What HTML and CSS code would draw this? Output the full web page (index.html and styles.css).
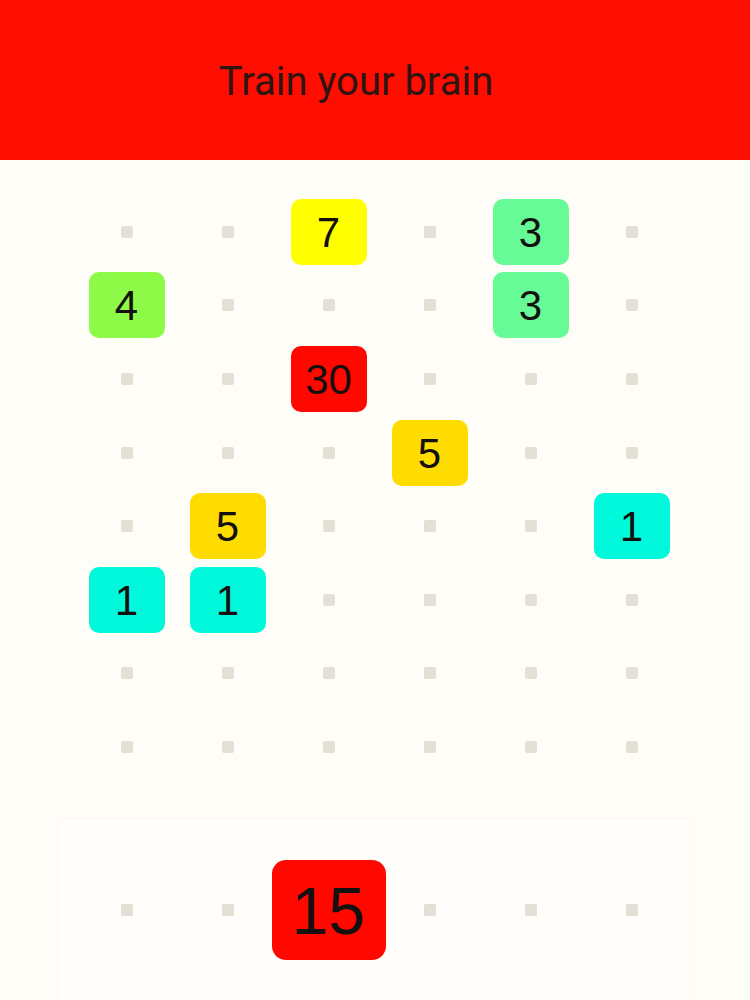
FILE: index.html
```html
<!DOCTYPE html>
<html lang="en">
<head>
<meta charset="utf-8">
<title>Train your brain</title>
<link rel="stylesheet" href="styles.css">
</head>
<body>
  <header class="topbar">
    <h1 class="title">Train your brain</h1>
  </header>

  <main class="board">
    <!-- row 1 -->
    <div class="cell"><span class="dot"></span></div>
    <div class="cell"><span class="dot"></span></div>
    <div class="cell"><span class="tile t-yellow">7</span></div>
    <div class="cell"><span class="dot"></span></div>
    <div class="cell"><span class="tile t-mint">3</span></div>
    <div class="cell"><span class="dot"></span></div>
    <!-- row 2 -->
    <div class="cell"><span class="tile t-lime">4</span></div>
    <div class="cell"><span class="dot"></span></div>
    <div class="cell"><span class="dot"></span></div>
    <div class="cell"><span class="dot"></span></div>
    <div class="cell"><span class="tile t-mint">3</span></div>
    <div class="cell"><span class="dot"></span></div>
    <!-- row 3 -->
    <div class="cell"><span class="dot"></span></div>
    <div class="cell"><span class="dot"></span></div>
    <div class="cell"><span class="tile t-red">30</span></div>
    <div class="cell"><span class="dot"></span></div>
    <div class="cell"><span class="dot"></span></div>
    <div class="cell"><span class="dot"></span></div>
    <!-- row 4 -->
    <div class="cell"><span class="dot"></span></div>
    <div class="cell"><span class="dot"></span></div>
    <div class="cell"><span class="dot"></span></div>
    <div class="cell"><span class="tile t-gold">5</span></div>
    <div class="cell"><span class="dot"></span></div>
    <div class="cell"><span class="dot"></span></div>
    <!-- row 5 -->
    <div class="cell"><span class="dot"></span></div>
    <div class="cell"><span class="tile t-gold">5</span></div>
    <div class="cell"><span class="dot"></span></div>
    <div class="cell"><span class="dot"></span></div>
    <div class="cell"><span class="dot"></span></div>
    <div class="cell"><span class="tile t-cyan">1</span></div>
    <!-- row 6 -->
    <div class="cell"><span class="tile t-cyan">1</span></div>
    <div class="cell"><span class="tile t-cyan">1</span></div>
    <div class="cell"><span class="dot"></span></div>
    <div class="cell"><span class="dot"></span></div>
    <div class="cell"><span class="dot"></span></div>
    <div class="cell"><span class="dot"></span></div>
    <!-- row 7 -->
    <div class="cell"><span class="dot"></span></div>
    <div class="cell"><span class="dot"></span></div>
    <div class="cell"><span class="dot"></span></div>
    <div class="cell"><span class="dot"></span></div>
    <div class="cell"><span class="dot"></span></div>
    <div class="cell"><span class="dot"></span></div>
    <!-- row 8 -->
    <div class="cell"><span class="dot"></span></div>
    <div class="cell"><span class="dot"></span></div>
    <div class="cell"><span class="dot"></span></div>
    <div class="cell"><span class="dot"></span></div>
    <div class="cell"><span class="dot"></span></div>
    <div class="cell"><span class="dot"></span></div>
  </main>

  <section class="tray">
    <div class="tray-row">
      <div class="cell"><span class="dot"></span></div>
      <div class="cell"><span class="dot"></span></div>
      <div class="cell"><span class="tile tile-big t-red">15</span></div>
      <div class="cell"><span class="dot"></span></div>
      <div class="cell"><span class="dot"></span></div>
      <div class="cell"><span class="dot"></span></div>
    </div>
  </section>
</body>
</html>
```

FILE: styles.css
```css
* {
  box-sizing: border-box;
}

html,
body {
  margin: 0;
  padding: 0;
  height: 100%;
  overflow: hidden;
}

body {
  background: #fffdf8;
  font-family: "Liberation Sans", Arial, sans-serif;
  color: #141010;
}

/* red title bar */
.topbar {
  height: 160px;
  background: #ff0d00;
  display: flex;
  align-items: center;
  justify-content: center;
  padding-right: 38px;
}

.title {
  margin: 2px 0 0 0;
  font-family: Roboto, "Liberation Sans", sans-serif;
  font-weight: 400;
  font-size: 40px;
  color: #2e1512;
  letter-spacing: 0;
}

/* playing field: 6 x 8 slots */
.board {
  display: grid;
  grid-template-columns: repeat(6, 101px);
  grid-auto-rows: 73.6px;
  padding: 35px 0 0 76px;
}

.cell {
  display: flex;
  align-items: center;
  justify-content: center;
}

.dot {
  width: 12px;
  height: 12px;
  border-radius: 2px;
  background: #e3e0d6;
}

.tile {
  flex-shrink: 0;
  width: 76px;
  height: 66px;
  border-radius: 10px;
  display: flex;
  align-items: center;
  justify-content: center;
  font-size: 42px;
  color: #141010;
  line-height: 1;
  padding-top: 2px;
}

.t-yellow { background: #ffff00; }
.t-mint   { background: #66fb96; }
.t-lime   { background: #8cfa46; }
.t-red    { background: #ff0800; }
.t-gold   { background: #ffdc00; }
.t-cyan   { background: #00f9da; }

/* tray with the current piece */
.tray {
  margin: 34px 60px 0 57px;
  height: 182px;
  background: #fffefa;
  border-top: 1px solid #faf8f2;
  border-left: 1px solid #faf8f2;
  border-right: 1px solid #faf8f2;
  border-radius: 4px 4px 0 0;
  padding: 41px 0 0 18px;
}

.tray-row {
  display: grid;
  grid-template-columns: repeat(6, 101px);
  height: 100px;
}

.tile-big {
  width: 114px;
  height: 100px;
  border-radius: 14px;
  font-size: 66px;
  padding-top: 3px;
}
```
